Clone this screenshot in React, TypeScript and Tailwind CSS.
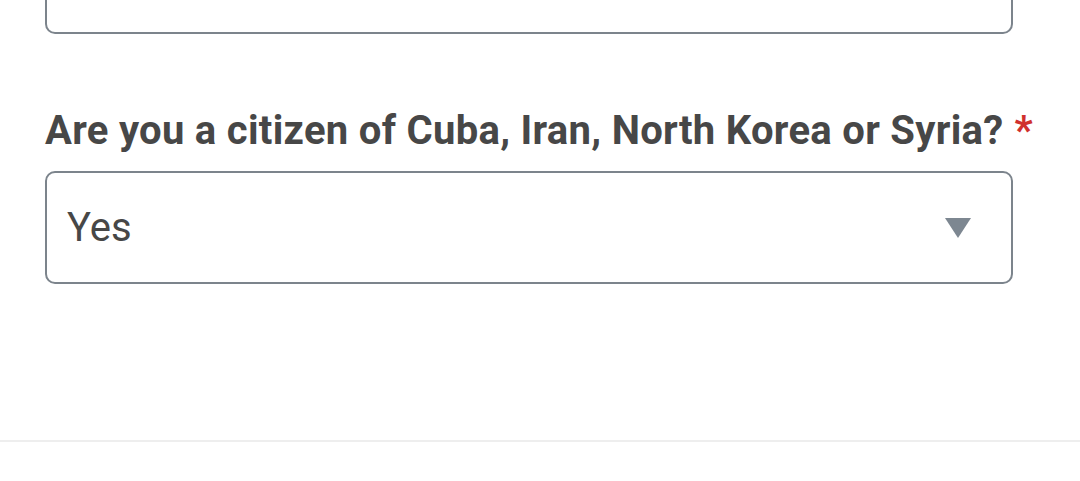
export default function App() {
  return (
    <div className="w-[1080px] h-[481px] bg-white overflow-hidden flex flex-col" style={{ fontFamily: "Roboto, 'Liberation Sans', sans-serif" }}>
      <div className="px-[45px] pr-[67px]">
        {/* previous field, cut off above */}
        <div className="h-[34px] border-2 border-t-0 border-[#7c848c] rounded-b-[10px]" />

        <label className="mt-[72px] flex items-start whitespace-nowrap text-[40px] tracking-[0.3px] leading-[50px] font-bold text-[#474747]">
          Are you a citizen of Cuba, Iran, North Korea or Syria?
          <span className="ml-[11px] text-[#d0312d] font-bold">*</span>
        </label>

        <div className="mt-[15px] h-[113px] border-2 border-[#7c848c] rounded-[10px] flex items-center justify-between pl-[20px] pr-[40px]">
          <span className="text-[40px] text-[#474747]">Yes</span>
          <svg width="26" height="20" viewBox="0 0 26 20">
            <path d="M0 0h26L13 20z" fill="#7d8791" />
          </svg>
        </div>
      </div>

      <div className="mt-auto mb-[39px] h-[2px] bg-[#eeeeee]" />
    </div>
  );
}
